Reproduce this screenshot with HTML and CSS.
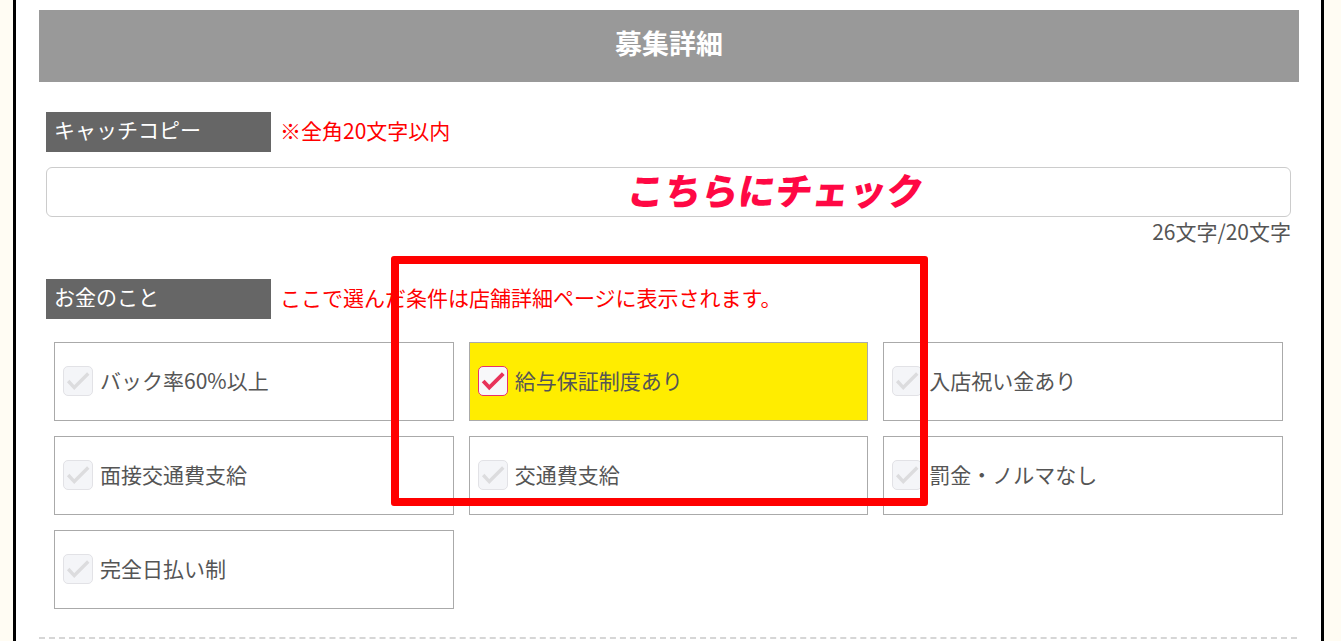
FILE: index.html
```html
<!DOCTYPE html>
<html lang="ja">
<head>
<meta charset="utf-8">
<title>募集詳細</title>
<link rel="stylesheet" href="styles.css">
</head>
<body>
<div class="page">
  <h1 class="title">募集詳細</h1>
  <div class="content">
    <div class="label-row">
      <div class="label">キャッチコピー</div>
      <div class="note">※全角20文字以内</div>
    </div>
    <div class="input"></div>
    <div class="counter">26文字/20文字</div>

    <div class="label-row second">
      <div class="label">お金のこと</div>
      <div class="note">ここで選んだ条件は店舗詳細ページに表示されます。</div>
    </div>

    <div class="grid">
      <div class="item"><span class="cb"><svg viewBox="0 0 30 30"><path d="M4.5 15 L11 22 L26 7" /></svg></span><span class="txt">バック率60%以上</span></div>
      <div class="item checked"><span class="cb"><svg viewBox="0 0 30 30"><path d="M4.5 15 L11 22 L26 7" /></svg></span><span class="txt">給与保証制度あり</span></div>
      <div class="item"><span class="cb"><svg viewBox="0 0 30 30"><path d="M4.5 15 L11 22 L26 7" /></svg></span><span class="txt">入店祝い金あり</span></div>
      <div class="item"><span class="cb"><svg viewBox="0 0 30 30"><path d="M4.5 15 L11 22 L26 7" /></svg></span><span class="txt">面接交通費支給</span></div>
      <div class="item"><span class="cb"><svg viewBox="0 0 30 30"><path d="M4.5 15 L11 22 L26 7" /></svg></span><span class="txt">交通費支給</span></div>
      <div class="item"><span class="cb"><svg viewBox="0 0 30 30"><path d="M4.5 15 L11 22 L26 7" /></svg></span><span class="txt">罰金・ノルマなし</span></div>
      <div class="item"><span class="cb"><svg viewBox="0 0 30 30"><path d="M4.5 15 L11 22 L26 7" /></svg></span><span class="txt">完全日払い制</span></div>
    </div>
  </div>
  <div class="dash"></div>

  <div class="callout-text">こちらにチェック</div>
  <div class="callout-box"></div>
</div>
</body>
</html>
```
FILE: styles.css
```css
html, body {
  margin: 0;
  padding: 0;
}
body {
  background: #fffcf3;
  font-family: "Noto Sans CJK JP", "Noto Sans", sans-serif;
  color: #555;
}
.page {
  position: relative;
  margin-left: 13px;
  width: 1305px;
  min-height: 700px;
  background: #fff;
  border-left: 3px solid #000;
  border-right: 3px solid #000;
  padding-top: 10px;
  box-sizing: content-box;
}
.title {
  margin: 0 22px 0 23px;
  height: 72px;
  box-sizing: border-box;
  padding-bottom: 8px;
  background: #999;
  color: #fff;
  font-size: 27px;
  font-weight: 700;
  display: flex;
  align-items: center;
  justify-content: center;
}
.content {
  padding: 0 30px;
}
.label-row {
  display: flex;
  align-items: center;
  margin-top: 30px;
}
.label-row.second {
  margin-top: 34px;
}
.label {
  width: 225px;
  height: 40px;
  box-sizing: border-box;
  background: #666;
  color: #fff;
  font-size: 21px;
  line-height: 35px;
  padding-left: 8px;
}
.note {
  color: #ff0000;
  font-size: 21px;
  margin-left: 9px;
  padding-bottom: 5px;
}
.input {
  margin-top: 15px;
  height: 50px;
  box-sizing: border-box;
  border: 1px solid #ccc;
  border-radius: 6px;
}
.counter {
  text-align: right;
  font-size: 21px;
  line-height: 28px;
  color: #555;
}
.grid {
  margin-top: 23px;
  padding: 0 8px;
  display: grid;
  grid-template-columns: repeat(3, 1fr);
  column-gap: 15px;
  row-gap: 15px;
}
.item {
  height: 79px;
  box-sizing: border-box;
  border: 1px solid #aaa;
  display: flex;
  align-items: center;
  padding-left: 8px;
  padding-bottom: 2px;
  font-size: 21px;
  color: #555;
}
.item.checked {
  background: #ffed00;
}
.cb {
  width: 30px;
  height: 30px;
  box-sizing: border-box;
  border: 1px solid #e2e2e6;
  border-radius: 5px;
  background: #f4f5f8;
  margin-right: 7px;
  display: flex;
  flex: none;
}
.cb svg {
  width: 100%;
  height: 100%;
}
.cb path {
  fill: none;
  stroke: #dcdcde;
  stroke-width: 3.6;
}
.checked .cb {
  border-color: #e8336b;
  background: #f8f8fa;
}
.checked .cb path {
  stroke: #e8335a;
  stroke-width: 4.2;
}
.txt {
  line-height: 1;
}
.dash {
  margin: 28px 24px 0 23px;
  border-top: 2px dashed #d6d6d6;
}
.callout-text {
  position: absolute;
  left: 612px;
  top: 161px;
  font-size: 37px;
  font-weight: 900;
  color: #ff0844;
  line-height: 56px;
  transform: skewX(-8deg);
  white-space: nowrap;
}
.callout-box {
  position: absolute;
  left: 375px;
  top: 256px;
  width: 537px;
  height: 250px;
  box-sizing: border-box;
  border: 8px solid #ff0000;
  border-radius: 3px;
}
```
